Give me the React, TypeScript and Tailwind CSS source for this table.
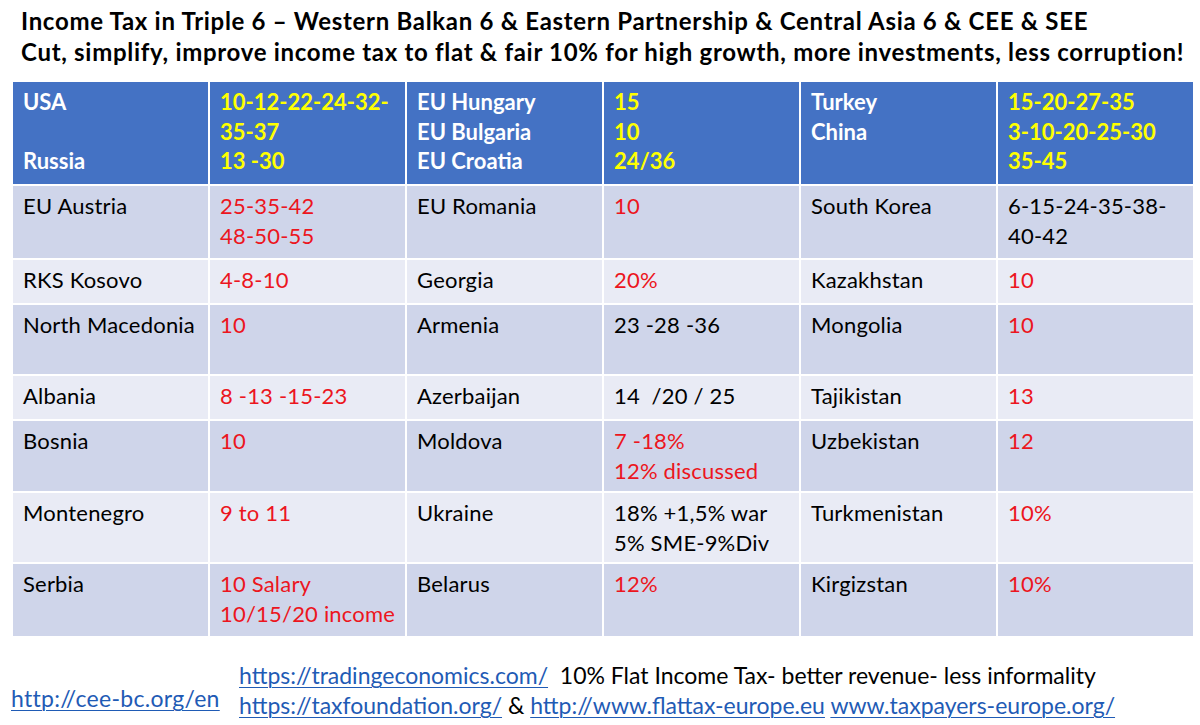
import React from 'react'

type Cell = { lines: string[]; tone?: 'black' | 'red' }
type Row = { h: string; cells: Cell[] }

const header: string[][] = [
  ['USA', '\u00a0', 'Russia'],
  ['10-12-22-24-32-', '35-37', '13 -30'],
  ['EU Hungary', 'EU Bulgaria', 'EU Croatia'],
  ['15', '10', '24/36'],
  ['Turkey', 'China'],
  ['15-20-27-35', '3-10-20-25-30', '35-45'],
]

const b = (...lines: string[]): Cell => ({ lines, tone: 'black' })
const r = (...lines: string[]): Cell => ({ lines, tone: 'red' })

const rows: Row[] = [
  { h: 'h-[72px]', cells: [b('EU Austria'), r('25-35-42', '48-50-55'), b('EU Romania'), r('10'), b('South Korea'), b('6-15-24-35-38-', '40-42')] },
  { h: 'h-[43px]', cells: [b('RKS Kosovo'), r('4-8-10'), b('Georgia'), r('20%'), b('Kazakhstan'), r('10')] },
  { h: 'h-[69px]', cells: [b('North Macedonia'), r('10'), b('Armenia'), b('23 -28 -36'), b('Mongolia'), r('10')] },
  { h: 'h-[43px]', cells: [b('Albania'), r('8 -13 -15-23'), b('Azerbaijan'), b('14  /20 / 25'), b('Tajikistan'), r('13')] },
  { h: 'h-[70px]', cells: [b('Bosnia'), r('10'), b('Moldova'), r('7 -18%', '12% discussed'), b('Uzbekistan'), r('12')] },
  { h: 'h-[69px]', cells: [b('Montenegro'), r('9 to 11'), b('Ukraine'), b('18% +1,5% war', '5% SME-9%Div'), b('Turkmenistan'), r('10%')] },
  { h: 'h-[72px]', cells: [b('Serbia'), r('10 Salary', '10/15/20 income'), b('Belarus'), r('12%'), b('Kirgizstan'), r('10%')] },
]

function Link({ children }: { children: React.ReactNode }) {
  return <span className="text-[#1f5bb5] underline decoration-1 underline-offset-[3px]">{children}</span>
}

export default function App() {
  return (
    <div className="w-[1200px] h-[725px] bg-white overflow-hidden font-['Lato','Liberation_Sans',sans-serif] text-black">
      {/* titel */}
      <div className="pl-[21px] pt-[5px] font-bold text-[24px] leading-[31px] tracking-[0.7px] whitespace-nowrap">
        <div>Income Tax in Triple 6 – Western Balkan 6 &amp; Eastern Partnership &amp; Central Asia 6 &amp; CEE &amp; SEE</div>
        <div>Cut, simplify, improve income tax to flat &amp; fair 10% for high growth, more investments, less corruption!</div>
      </div>

      {/* tabelle */}
      <div className="ml-[13px] mt-[15px] w-[1180px] flex flex-col gap-[2px] text-[22px] leading-[29.5px] tracking-[0.2px]">
        <div className="grid grid-cols-6 gap-x-[2px] h-[102px]">
          {header.map((lines, i) => (
            <div key={i} className={`bg-[#4472c4] pl-[10px] pt-[5px] font-bold tracking-normal ${i % 2 ? 'text-[#ffff00]' : 'text-white'}`}>
              {lines.map((l, j) => (
                <div key={j}>{l}</div>
              ))}
            </div>
          ))}
        </div>
        {rows.map((row, ri) => (
          <div key={ri} className={`grid grid-cols-6 gap-x-[2px] ${row.h}`}>
            {row.cells.map((c, ci) => (
              <div
                key={ci}
                className={`pl-[10px] pt-[5px] whitespace-pre ${ri % 2 ? 'bg-[#e9ebf5]' : 'bg-[#cfd5ea]'} ${c.tone === 'red' ? 'text-[#ec1520]' : 'text-black'}`}
              >
                {c.lines.map((l, j) => (
                  <div key={j}>{l}</div>
                ))}
              </div>
            ))}
          </div>
        ))}
      </div>

      {/* links */}
      <div className="mt-[24px] flex items-center text-[23px] leading-[30px] whitespace-nowrap">
        <div className="pl-[11px] pt-[16px] w-[239px] tracking-[0.3px]">
          <Link>http://cee-bc.org/en</Link>
        </div>
        <div>
          <div>
            <Link>https://tradingeconomics.com/</Link>&nbsp; 10% Flat Income Tax- better revenue- less informality
          </div>
          <div>
            <Link>https://taxfoundation.org/</Link> &amp; <Link>http://www.flattax-europe.eu</Link> <Link>www.taxpayers-europe.org/</Link>
          </div>
        </div>
      </div>
    </div>
  )
}
